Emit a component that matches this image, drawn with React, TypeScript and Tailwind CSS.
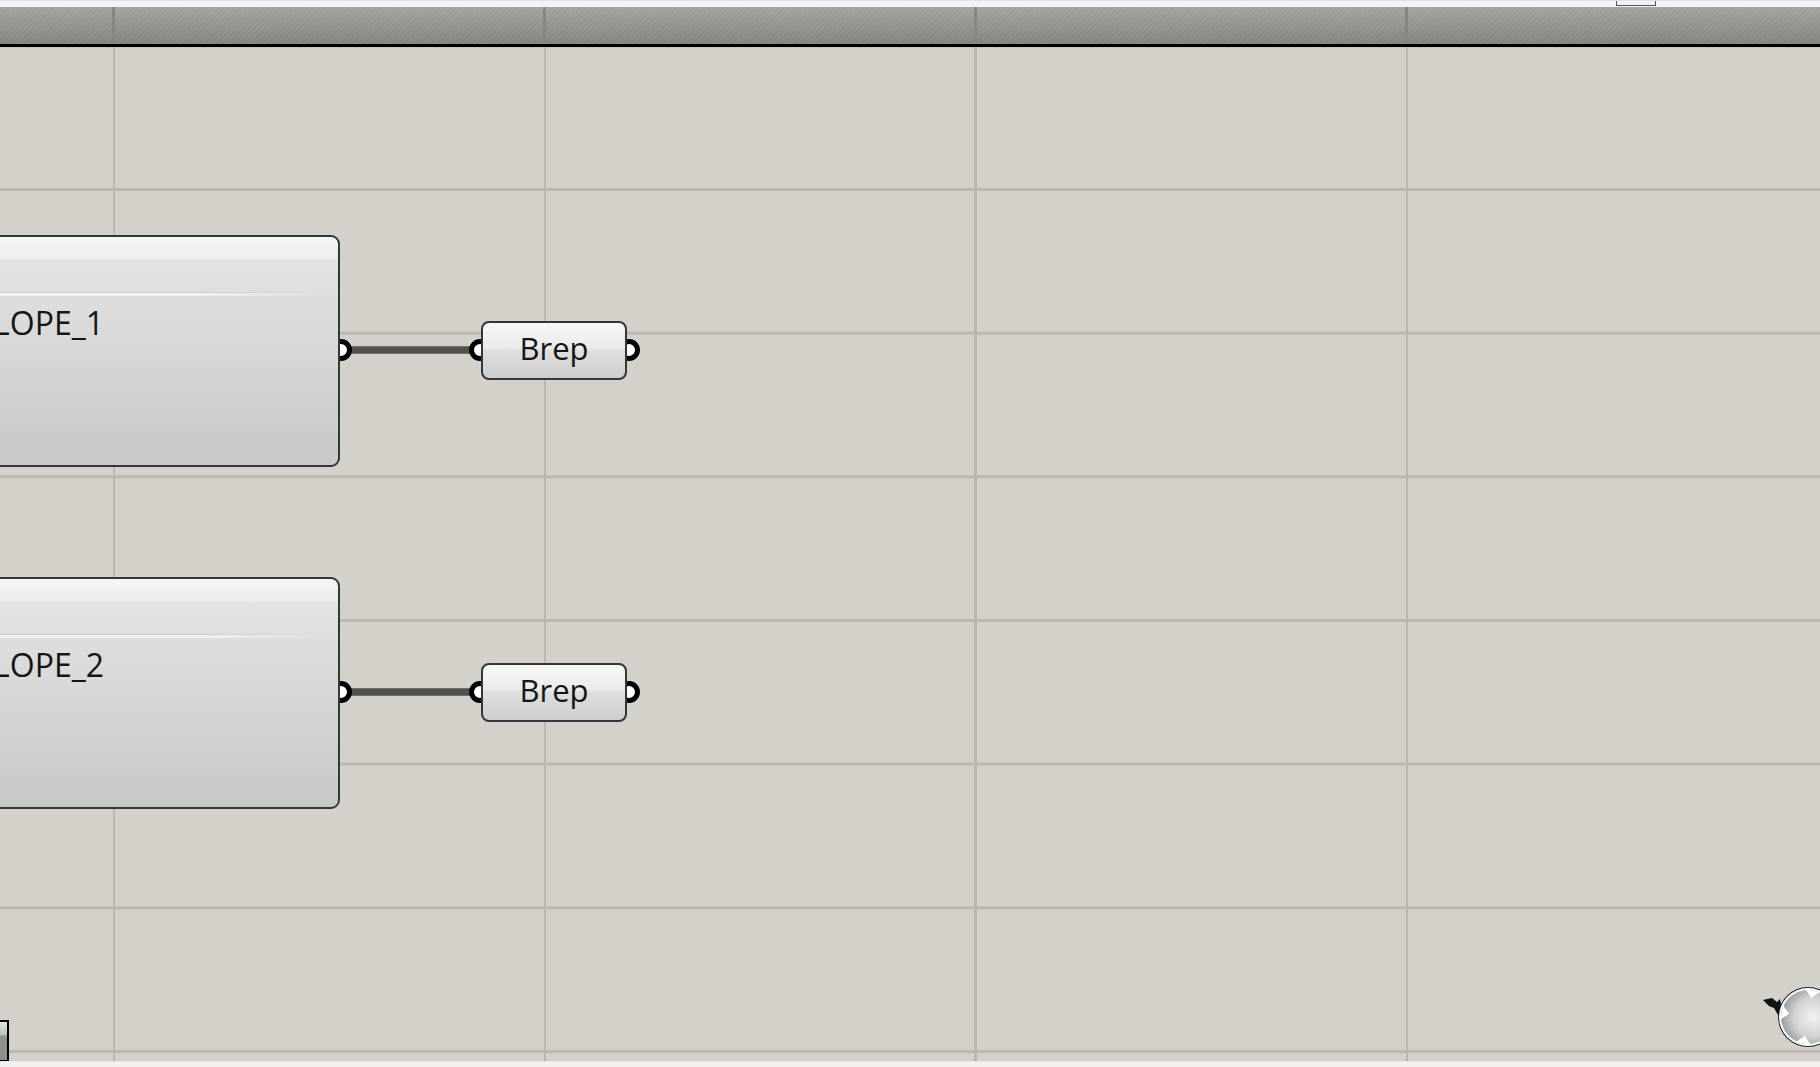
import React from "react";

const font = { fontFamily: '"Open Sans", "Noto Sans", "Liberation Sans", sans-serif' };

function ParamNode({ top, label }: { top: number; label: string }) {
  return (
    <div
      className="absolute left-[-300px] w-[640px] h-[232px] rounded-[9px] border-2 border-[#363636] overflow-hidden bg-[linear-gradient(to_bottom,#f6f6f6_0px,#ececec_22px,#e3e3e3_23px,#dedede_60px,#c8c8c8_100%)]"
      style={{ top }}
    >
      <div className="absolute left-0 top-[55px] w-[620px] h-[1px] bg-[linear-gradient(to_right,#cfcfcf_85%,transparent)]" />
      <div className="absolute left-0 top-[56px] w-[620px] h-[3px] bg-[linear-gradient(to_right,#f1f1f1_80%,transparent)]" />
      <span
        className="absolute right-[234px] top-[70px] whitespace-nowrap text-[32px] leading-none text-[#151515]"
        style={font}
      >
        {label}
      </span>
    </div>
  );
}

function BrepNode({ top }: { top: number }) {
  return (
    <div
      className="absolute left-[481px] w-[146px] h-[59px] rounded-[8px] border-2 border-[#363636] flex items-center justify-center bg-[linear-gradient(to_bottom,#f7f7f7_0%,#ebebeb_45%,#dfdfdf_50%,#cdcdcd_100%)]"
      style={{ top }}
    >
      <span className="text-[31px] leading-none text-[#151515] -mt-[4px]" style={font}>
        Brep
      </span>
    </div>
  );
}

function Ports({ y }: { y: number }) {
  return (
    <g>
      <line x1={346} y1={y} x2={476} y2={y} stroke="#53514d" strokeWidth={7.5} />
      <circle cx={341} cy={y} r={8.5} fill="#ffffff" stroke="#000" strokeWidth={5} />
      <circle cx={480} cy={y} r={8.5} fill="#ffffff" stroke="#000" strokeWidth={5} />
      <circle cx={629} cy={y} r={8.5} fill="#ffffff" stroke="#000" strokeWidth={5} />
    </g>
  );
}

function NavWidget() {
  const cx = 60;
  const cy = 48;
  const tri = (deg: number) => {
    const a = (deg * Math.PI) / 180;
    const r1 = 27.5;
    const r2 = 19;
    const w = 0.26;
    const p1 = [cx + r1 * Math.cos(a - w), cy + r1 * Math.sin(a - w)];
    const p2 = [cx + r1 * Math.cos(a + w), cy + r1 * Math.sin(a + w)];
    const p3 = [cx + r2 * Math.cos(a), cy + r2 * Math.sin(a)];
    return `${p1.join(",")} ${p2.join(",")} ${p3.join(",")}`;
  };
  return (
    <svg className="absolute left-[1748px] top-[922px]" width="120" height="100" viewBox="0 0 120 100">
      <defs>
        <radialGradient id="navg" cx="0.6" cy="0.5" r="0.6">
          <stop offset="0" stopColor="#f2f2f2" />
          <stop offset="0.6" stopColor="#d2d2d2" />
          <stop offset="1" stopColor="#9c9c9c" />
        </radialGradient>
      </defs>
      <polygon points="15,31 24,29 29,33 32,30 34,41 30,46 26,39 21,37" fill="#111" />
      <circle cx={cx} cy={cy} r={30} fill="#222" />
      <circle cx={cx} cy={cy} r={29} fill="#ffffff" />
      <circle cx={cx} cy={cy} r={27} fill="url(#navg)" />
      <polygon points={tri(-80)} fill="#fff" />
      <polygon points={tri(10)} fill="#fff" />
      <polygon points={tri(100)} fill="#fff" />
      <polygon points={tri(190)} fill="#fff" />
    </svg>
  );
}

export default function App() {
  return (
    <div className="w-[1820px] h-[1067px] flex flex-col overflow-hidden bg-[#d4d0ca]">
      <div className="h-[7px] bg-[#f3f3f4] border-t border-[#e2e2e4] relative shrink-0">
        <div className="absolute left-[1616px] top-0 w-[40px] h-[5px] border-x border-b border-[#555]" />
      </div>
      <div className="relative h-[37px] shrink-0 bg-[image:repeating-linear-gradient(135deg,rgba(255,255,255,0.025)_0px,rgba(255,255,255,0.025)_2px,rgba(0,0,0,0.025)_2px,rgba(0,0,0,0.025)_4px),linear-gradient(to_bottom,#a7a59f,#868580)]">
        <div className="absolute left-[112px] top-0 h-full w-[3px] bg-[#878681]" />
        <div className="absolute left-[543px] top-0 h-full w-[3px] bg-[#878681]" />
        <div className="absolute left-[974px] top-0 h-full w-[3px] bg-[#878681]" />
        <div className="absolute left-[1405px] top-0 h-full w-[3px] bg-[#878681]" />
      </div>
      <div className="h-[3px] bg-black shrink-0" />
      <div className="relative flex-1 overflow-hidden bg-[#d4d0ca] bg-[image:linear-gradient(to_right,#bcb8b1_3px,transparent_3px),linear-gradient(to_bottom,#bcb8b1_3px,transparent_3px)] bg-[size:431px_143.67px] bg-[position:112px_141px]">
        <svg className="absolute inset-0" width="1820" height="1014">
          <Ports y={303} />
          <Ports y={645} />
        </svg>
        <ParamNode top={188} label="ENVELOPE_1" />
        <ParamNode top={530} label="ENVELOPE_2" />
        <BrepNode top={274} />
        <BrepNode top={616} />
        <div className="absolute left-0 top-[973px] w-[9px] h-[42px] border-y-2 border-r-2 border-black bg-[linear-gradient(to_bottom,#e4e4e4_0%,#bdbdbd_35%,#93928d_36%,#8f8e89_100%)]" />
        <NavWidget />
      </div>
      <div className="h-[6px] shrink-0 bg-[#f1f1f1] border-t border-[#e6e6e6]" />
    </div>
  );
}
